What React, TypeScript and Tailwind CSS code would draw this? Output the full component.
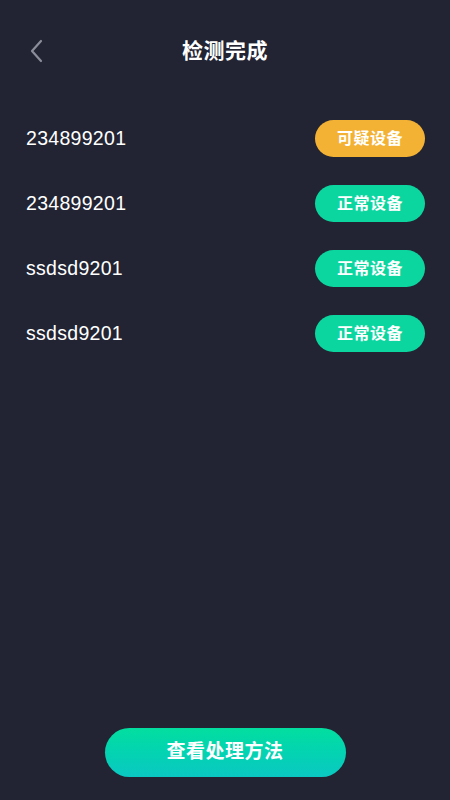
const devices = [
  { id: '234899201', status: '可疑设备', warn: true },
  { id: '234899201', status: '正常设备', warn: false },
  { id: 'ssdsd9201', status: '正常设备', warn: false },
  { id: 'ssdsd9201', status: '正常设备', warn: false },
];

export default function App() {
  return (
    <div
      className="min-h-[800px] h-[800px] w-full bg-[#222433] text-white flex flex-col"
      style={{ fontFamily: '"Liberation Sans", "Noto Sans CJK SC", sans-serif' }}
    >
      {/* header */}
      <header className="relative flex items-center justify-center h-[50px] mt-[26px]">
        <button className="absolute left-[27px] top-[12px] w-[18px] h-[26px] flex items-center justify-center">
          <svg width="14" height="24" viewBox="0 0 14 24" fill="none">
            <path d="M12 2 L3 12 L12 22" stroke="#8b8d9a" strokeWidth="2.2" strokeLinecap="round" strokeLinejoin="round" />
          </svg>
        </button>
        <h1 className="text-[21px] font-bold tracking-[0.5px]">检测完成</h1>
      </header>

      {/* list */}
      <div className="flex flex-col mt-[30px] px-[25px]">
        {devices.map((d, i) => (
          <div key={i} className="flex items-center justify-between h-[65px]">
            <span className="text-[19.5px] tracking-[0.3px] pl-[1px]">{d.id}</span>
            <span
              className={`w-[110px] h-[37px] rounded-full flex items-center justify-center text-[16px] font-bold tracking-[0.5px] ${
                d.warn ? 'bg-[#f4b234]' : 'bg-[#0cd6a0]'
              }`}
            >
              {d.status}
            </span>
          </div>
        ))}
      </div>

      <div className="flex-1" />

      {/* bottom button */}
      <div className="flex justify-center pb-[23px]">
        <button className="w-[241px] h-[49px] rounded-full bg-gradient-to-b from-[#03de9f] to-[#0bc8c2] text-[19px] font-bold tracking-[0.5px]">
          查看处理方法
        </button>
      </div>
    </div>
  );
}
